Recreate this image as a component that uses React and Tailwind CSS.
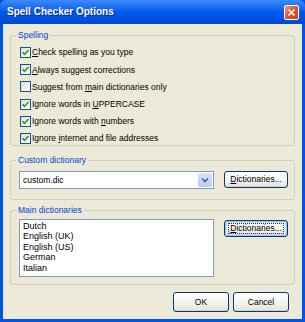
import React from "react";

const font = { fontFamily: '"Liberation Sans", Arial, sans-serif' };

function Check({ checked }) {
  return (
    <span className="relative flex h-[11px] w-[11px] shrink-0 items-center justify-center border border-[#1C5180] bg-gradient-to-br from-[#DCDCD7] to-[#FFFFFF]">
      {checked && (
        <svg width="9" height="9" viewBox="0 0 9 9">
          <path d="M1.5 4.2 L3.5 6.3 L7.6 2" fill="none" stroke="#21A121" strokeWidth="1.6" />
        </svg>
      )}
    </span>
  );
}

function Row({ checked, children }) {
  return (
    <div className="flex h-[17.2px] items-center gap-[1px]">
      <Check checked={checked} />
      <span className="text-[8.5px] leading-none text-black">{children}</span>
    </div>
  );
}

function Group({ label, className, children }) {
  return (
    <div className={"relative rounded-[3px] border border-[#D0D0BF] " + className}>
      <span className="absolute left-[5px] top-[-6px] bg-[#ECE9D8] px-[2px] text-[8.5px] leading-[11px] text-[#0046D5]">
        {label}
      </span>
      {children}
    </div>
  );
}

function Btn({ children, focus, className }) {
  return (
    <div
      className={
        "flex items-center justify-center rounded-[3px] border border-[#003C74] bg-gradient-to-b from-[#FFFFFF] via-[#F4F4F0] to-[#E3E2DA] text-[8.5px] leading-none text-black " +
        (focus ? "shadow-[inset_0_0_0_1px_#A8C2EE,inset_0_0_0_2px_#CCDBF6] " : "shadow-[inset_0_-1px_0_#D6D0C5] ") +
        className
      }
    >
      {children}
    </div>
  );
}

const U = ({ children }) => <span className="underline underline-offset-[1px]">{children}</span>;

export default function App() {
  return (
    <div className="flex h-[322px] w-[305px] flex-col overflow-hidden bg-[#0054E3]" style={font}>
      <div className="flex h-[24px] shrink-0 items-center justify-between rounded-t-[6px] bg-gradient-to-b from-[#3D8BF7] via-[#0058EE] to-[#0049D4] pl-[7px] pr-[6px]">
        <span className="text-[10px] font-bold leading-none text-white [text-shadow:1px_1px_0_#0A2E8C]">
          Spell Checker Options
        </span>
        <div className="flex h-[15px] w-[15px] items-center justify-center rounded-[2px] border border-white bg-gradient-to-br from-[#E89A7E] via-[#D9562F] to-[#C3401C]">
          <svg width="9" height="9" viewBox="0 0 9 9">
            <path d="M1.5 1.5 L7.5 7.5 M7.5 1.5 L1.5 7.5" stroke="white" strokeWidth="1.7" />
          </svg>
        </div>
      </div>
      <div className="mx-[3px] mb-[3px] flex flex-1 flex-col bg-[#ECE9D8] px-[7px] pt-[11px]">
        <Group label="Spelling" className="h-[111px] pl-[9px] pt-[8px]">
          <Row checked><U>C</U>heck spelling as you type</Row>
          <Row checked><U>A</U>lways suggest corrections</Row>
          <Row>Suggest from <U>m</U>ain dictionaries only</Row>
          <Row checked>Ignore words in <U>U</U>PPERCASE</Row>
          <Row checked>Ignore words with <U>n</U>umbers</Row>
          <Row checked>Ignore <U>i</U>nternet and file addresses</Row>
        </Group>
        <Group label="Custom dictionary" className="mt-[14px] flex h-[40px] items-start gap-[10px] pl-[8px] pt-[10px]">
          <div className="flex h-[18px] w-[195px] items-center border border-[#7F9DB9] bg-white p-[1px]">
            <span className="flex-1 pl-[2px] text-[8.5px] leading-none text-black">custom.dic</span>
            <div className="flex h-full w-[14px] items-center justify-center rounded-[2px] bg-gradient-to-b from-[#D6E3FD] to-[#B5CAF7]">
              <svg width="8" height="6" viewBox="0 0 8 6">
                <path d="M1 1.5 L4 4.5 L7 1.5" fill="none" stroke="#4D6185" strokeWidth="1.6" />
              </svg>
            </div>
          </div>
          <Btn className="h-[17px] w-[64px]"><U>D</U>ictionaries...</Btn>
        </Group>
        <Group label="Main dictionaries" className="mt-[10px] flex h-[75px] items-start gap-[10px] pl-[8px] pt-[8px]">
          <div className="flex h-[58px] w-[195px] flex-col border border-[#7F9DB9] bg-white pl-[3px] pt-[1px] text-[9px] leading-[10.4px] text-black">
            <span>Dutch</span>
            <span>English (UK)</span>
            <span>English (US)</span>
            <span>German</span>
            <span>Italian</span>
          </div>
          <Btn focus className="mt-[1px] h-[17px] w-[64px]">
            <span className="px-[1px] outline outline-1 outline-dotted outline-[#333]">
              <U>D</U>ictionaries...
            </span>
          </Btn>
        </Group>
        <div className="mr-[6px] mt-[7px] flex justify-end gap-[4px]">
          <Btn className="h-[20px] w-[56px]">OK</Btn>
          <Btn className="h-[20px] w-[56px]">Cancel</Btn>
        </div>
      </div>
    </div>
  );
}
